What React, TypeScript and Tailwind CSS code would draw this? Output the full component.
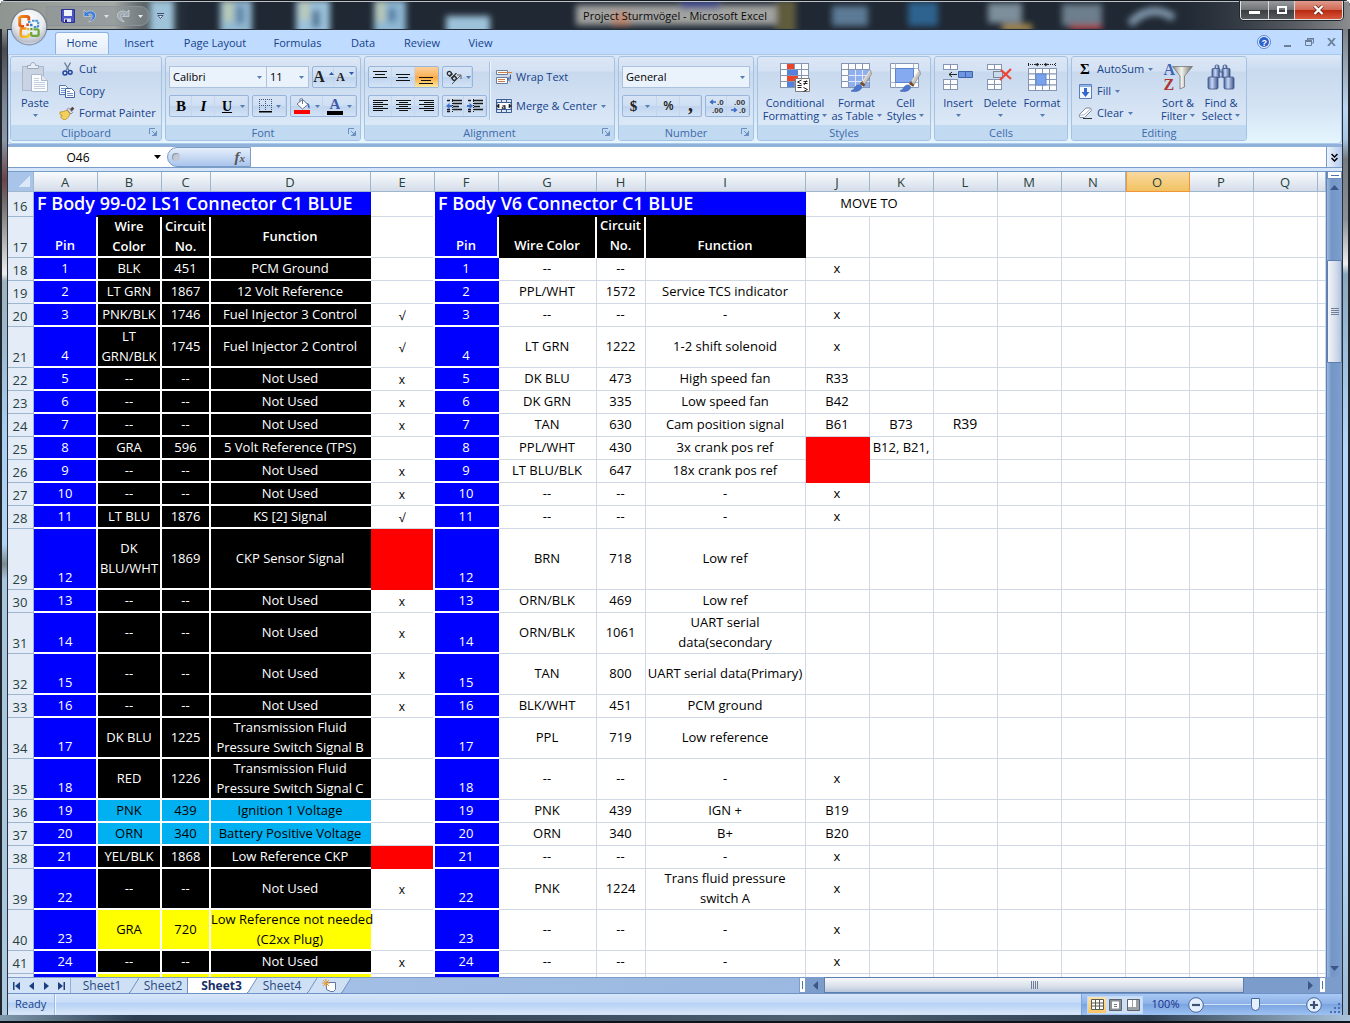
import React from "react";

/* ---------- small shared pieces ---------- */

function Caret({ className = "text-[#567db1]" }: { className?: string }) {
  return (
    <svg width="5" height="3" viewBox="0 0 5 3" className={`shrink-0 ${className}`} aria-hidden="true">
      <path d="M0 0h5L2.5 3z" fill="currentColor" />
    </svg>
  );
}

function Launcher() {
  return (
    <svg width="8" height="8" viewBox="0 0 8 8" fill="none" aria-hidden="true">
      <path d="M.5 6V.5H6" stroke="#6b8fc0" />
      <path d="M3 3l3 3M7.5 3v4.5H3" stroke="#6b8fc0" />
      <path d="M7 4v3H4z" fill="#6b8fc0" />
    </svg>
  );
}

function Group({
  label,
  launcher,
  className,
  children,
}: {
  label: string;
  launcher?: boolean;
  className: string;
  children: React.ReactNode;
}) {
  return (
    <section
      aria-label={label}
      className={`flex h-[85px] shrink-0 flex-col overflow-hidden rounded-[3px] border border-[#a6c2e3] bg-[linear-gradient(#dce7f5_0px,#d3e1f3_14px,#c8d9ee_15px,#dbe8f7_69px)] ${className}`}
    >
      <div className="min-h-0 flex-1">{children}</div>
      <div className="relative h-[15px] shrink-0 bg-[#c1d9f1] text-center text-[11px] leading-[15px] text-[#3e6aaa]">
        {label}
        {launcher && (
          <button aria-label={`${label} options`} className="absolute right-1 top-[3px]">
            <Launcher />
          </button>
        )}
      </div>
    </section>
  );
}

function Box({ className = "", children }: { className?: string; children: React.ReactNode }) {
  return (
    <div
      className={`flex h-[22px] shrink-0 items-stretch rounded-[2px] border border-[#98b5dc] bg-[linear-gradient(#d6e4f5_0%,#cfdff3_48%,#c0d4ee_52%,#d3e3f6_100%)] ${className}`}
    >
      {children}
    </div>
  );
}

function Tool({
  label,
  active,
  className = "w-[23px]",
  children,
}: {
  label: string;
  active?: boolean;
  className?: string;
  children: React.ReactNode;
}) {
  return (
    <button
      aria-label={label}
      title={label}
      className={`flex shrink-0 items-center justify-center gap-1 ${
        active
          ? "bg-[linear-gradient(#fcd09a_0%,#fbb45c_45%,#fca63c_50%,#fee89a_100%)]"
          : "shadow-[inset_-1px_0_0_#c4d6ee]"
      } ${className}`}
    >
      {children}
    </button>
  );
}

function Picker({ label, value, className }: { label: string; value: string; className: string }) {
  return (
    <div className={`relative flex h-[22px] shrink-0 items-center border border-[#abc1de] bg-[#eaf2fb] ${className}`}>
      <select aria-label={label} className="h-full w-full appearance-none bg-transparent pl-[3px] text-[11px] text-black outline-none">
        <option>{value}</option>
      </select>
      <span className="pointer-events-none absolute right-1">
        <Caret />
      </span>
    </div>
  );
}

function RowButton({ icon, caret, children }: { icon: React.ReactNode; caret?: boolean; children: React.ReactNode }) {
  return (
    <button className="flex h-[22px] items-center gap-1 whitespace-nowrap text-[11px] text-[#15428b]">
      <span className="flex w-4 justify-center">{icon}</span>
      <span>{children}</span>
      {caret && <Caret />}
    </button>
  );
}

function BigButton({
  icon,
  lines,
  inline,
  className,
}: {
  icon: React.ReactNode;
  lines: string[];
  inline?: boolean;
  className: string;
}) {
  return (
    <button
      className={`flex shrink-0 flex-col items-center whitespace-nowrap pt-1 text-[11px] leading-[13px] text-[#15428b] ${className}`}
    >
      <span className="mb-[3px] flex h-8 items-center">{icon}</span>
      <span>{lines[0]}</span>
      {inline ? (
        <span className="flex items-center gap-[3px]">
          {lines[1]}
          <Caret />
        </span>
      ) : (
        <span className="flex h-[13px] items-center">
          <Caret />
        </span>
      )}
    </button>
  );
}

/* ---------- icons ---------- */

const OfficeLogo = () => (
  <svg width="38" height="38" viewBox="0 0 38 38" aria-hidden="true">
    <defs>
      <radialGradient id="orb" cx="50%" cy="30%" r="75%">
        <stop offset="0" stopColor="#fff" />
        <stop offset=".55" stopColor="#e9ebef" />
        <stop offset=".85" stopColor="#b9bec9" />
        <stop offset="1" stopColor="#eef1f6" />
      </radialGradient>
      <linearGradient id="orbRed" x1="0" y1="0" x2="1" y2="1">
        <stop offset="0" stopColor="#f0901c" />
        <stop offset="1" stopColor="#d4300a" />
      </linearGradient>
      <linearGradient id="orbYellow" x1="0" y1="0" x2="1" y2="1">
        <stop offset="0" stopColor="#f08a1c" />
        <stop offset="1" stopColor="#f8ca2c" />
      </linearGradient>
    </defs>
    <circle cx="19" cy="19" r="18.5" fill="#5b6573" opacity=".6" />
    <circle cx="19" cy="19" r="17.3" fill="url(#orb)" />
    <g fill="none" strokeLinejoin="round">
      <path d="M14 18.500h-2.500l-1.800-1.200V9.800l1.800-1.300h6l1.300 1v3" stroke="url(#orbRed)" strokeWidth="2.900" />
      <path d="M16.500 20.500h-4.500l-1.200 1v6l1.200 1.200h5.500l1.200-1v-2.200" stroke="url(#orbYellow)" strokeWidth="2.500" />
      <path d="M18 14h2.500M22 12.800h5.200l1 .8v4.600l-1 .9H23" stroke="#4a94d6" strokeWidth="2" strokeDasharray="2.600 .7" />
      <path d="M23.500 21.300h4l1.100.9v4.800l-1.100.9h-5.200l-1.100-.9V24" stroke="#6fa83a" strokeWidth="2.300" />
    </g>
    <path d="M16.300 15.500h2.600v2.600h-2.600z" fill="#d94a17" />
    <path d="M20 15.800h2.500v2.400H20z" fill="#2f7cc8" />
    <path d="M17.200 20h2v2.200h-2z" fill="#eda51b" />
    <path d="M20.300 20h2.200v2.200h-2.200z" fill="#5c9b2c" />
  </svg>
);

const SaveIcon = () => (
  <svg width="14" height="14" viewBox="0 0 14 14" aria-hidden="true">
    <path d="M.5.500h13v13H2L.500 12z" fill="#4c55c4" stroke="#2a3190" />
    <path d="M3 1h8v6H3z" fill="#eef3ff" />
    <path d="M3 9.500h7V13H3z" fill="#d6dcf5" />
    <path d="M4 10.500h2V13H4z" fill="#20266f" />
  </svg>
);

const UndoIcon = ({ flip, color }: { flip?: boolean; color: string }) => (
  <svg width="13" height="14" viewBox="0 0 13 14" className={flip ? "-scale-x-100" : ""} aria-hidden="true">
    <path d="M1 1v6.500h6.500L5.300 5.400c2-1.200 4-.4 4 1.600 0 2.300-1.500 4-3.600 5.900 3.800-1 6.900-3.300 6.900-6.500C12.600 2.200 7 .6 3.300 3.300z" fill={color} stroke="#e6eef8" strokeWidth=".5" />
  </svg>
);

const PasteIcon = () => (
  <svg width="28" height="31" viewBox="0 0 28 31" aria-hidden="true">
    <path d="M1.500 4.500h21v24h-21z" fill="#c9d3e2" stroke="#aab6c9" />
    <path d="M6.500 6.500V3.500h3c0-4 5-4 5 0h3v3z" fill="#e9eef5" stroke="#9ba8bb" />
    <path d="M10.500 12.500h10l6 6v11h-16z" fill="#fbfcfe" stroke="#a9b8cf" />
    <path d="M20.500 12.500v6h6" fill="#e0e7f1" stroke="#a9b8cf" />
    <path d="M13 16.500h5m-5 2h5m-5 2h11m-11 2h11m-11 2h11m-11 2h11" stroke="#c4cfdf" />
  </svg>
);

const CutIcon = () => (
  <svg width="11" height="14" viewBox="0 0 11 14" fill="none" aria-hidden="true">
    <path d="M2.500.500l4.500 8M8.500.500L4 8.500" stroke="#6b7f9e" strokeWidth="1.400" />
    <circle cx="3" cy="11" r="2" stroke="#24479c" strokeWidth="1.500" />
    <circle cx="8.200" cy="10.300" r="1.900" stroke="#24479c" strokeWidth="1.500" />
  </svg>
);

const CopyIcon = () => (
  <svg width="16" height="14" viewBox="0 0 16 14" aria-hidden="true">
    <path d="M.5 1.500h6l2 2v7h-8z" fill="#f5f9ff" stroke="#5377ad" />
    <path d="M2 4.500h4m-4 2h4m-4 2h4" stroke="#6f93c8" />
    <path d="M6.500 4.500h6l3 3v6h-9z" fill="#fff" stroke="#3f66a3" />
    <path d="M8 7.500h3m-3 2h6m-6 2h6" stroke="#6f93c8" />
  </svg>
);

const PainterIcon = () => (
  <svg width="16" height="14" viewBox="0 0 16 14" aria-hidden="true">
    <path d="M1 6c3 0 5-1 7-2l3 4c-1 2.500-3 5-5 6-2-.5-4-2-4.500-3l2-1.500L1 8.500z" fill="#f3cf5b" stroke="#b98c25" strokeWidth=".8" />
    <path d="M8 3.500l4 4.500 1.500-1.500L9.700 2z" fill="#e8e8ee" stroke="#65656f" strokeWidth=".7" />
    <path d="M11 3.200L13.300.700l2 1.800-2.300 2.700z" fill="#57423a" />
  </svg>
);

const SizeMark = ({ up }: { up?: boolean }) => (
  <svg width="5" height="3" viewBox="0 0 5 3" className="mb-2 shrink-0" aria-hidden="true">
    <path d={up ? "M0 3h5L2.500 0z" : "M0 0h5L2.500 3z"} fill="#2f5aa8" />
  </svg>
);

const Lines = ({ rows, offset = 0, step = 2 }: { rows: number[][]; offset?: number; step?: number }) => (
  <svg width="15" height="14" viewBox="0 0 15 14" aria-hidden="true">
    {rows.map(([x, w], i) => (
      <rect key={i} x={x} y={offset + i * step} width={w} height="1" fill="#111" />
    ))}
  </svg>
);

const IndentIcon = ({ right }: { right?: boolean }) => (
  <svg width="16" height="14" viewBox="0 0 16 14" aria-hidden="true">
    <path d="M1 1.500h3m2 0h10M7 4.500h9M7 7.500h6M1 10.500h3m3 0h9M1 12.500h3" stroke="#1a1a1a" strokeWidth="1.500" />
    <path d="M6.500 0v14" stroke="#1a1a1a" strokeDasharray="1 1" />
    <path d={right ? "M0 6h2.500V3.700L6 7 2.500 10V8H0z" : "M6 6H3.500V3.700L0 7l3.500 3V8H6z"} fill="#3f6fc9" />
  </svg>
);

const OrientationIcon = () => (
  <svg width="17" height="16" viewBox="0 0 17 16" fill="none" aria-hidden="true">
    <g stroke="#2b2b2b" strokeWidth="1.300" transform="rotate(45 7 6)">
      <circle cx="4" cy="6.800" r="2" />
      <path d="M6.300 4.500v4.600M8.800 1.500v7.600" />
      <circle cx="11" cy="6.800" r="2" />
    </g>
    <path d="M7 15l8.500-8.500M16 6v4M16 6h-4" stroke="#5a5a5a" />
  </svg>
);

const WrapIcon = () => (
  <svg width="16" height="15" viewBox="0 0 16 15" aria-hidden="true">
    <path d="M.5.500h11v4H.500zM.500 7.500h11v6H.500z" fill="#fff" stroke="#6c7d97" />
    <path d="M2 2.500h14M2 9.500h7M2 11.500h7" stroke="#d08246" />
    <path d="M14.500 4.500V9H12m2-2.500L11.500 9l2.500 2.500" stroke="#3c5a96" fill="none" />
  </svg>
);

const MergeIcon = () => (
  <svg width="16" height="14" viewBox="0 0 16 14" aria-hidden="true">
    <path d="M.5.500h15v13H.500z" fill="#dce8f8" stroke="#3e5d92" />
    <path d="M5.500.500v13M10.500.500v13" stroke="#3e5d92" />
    <path d="M1 3.500h14v7H1z" fill="#fff" stroke="#3e5d92" />
    <text x="5.500" y="9.500" fontSize="9" fontWeight="bold" fontFamily="Liberation Serif, serif" fill="#222">
      a
    </text>
    <path d="M0 7h3m10 0h3M3 5l-2 2 2 2zM13 5l2 2-2 2z" stroke="#222" fill="#222" strokeWidth=".7" />
  </svg>
);

const BordersIcon = () => (
  <svg width="13" height="14" viewBox="0 0 13 14" aria-hidden="true">
    <path d="M0 .5h13M0 6.500h13M.5 0v12M6.500 0v12M12.500 0v12" stroke="#3d5379" strokeDasharray="1 1" />
    <path d="M0 12.800h13" stroke="#000" strokeWidth="1.400" />
  </svg>
);

const FillColorIcon = () => (
  <svg width="17" height="16" viewBox="0 0 17 16" aria-hidden="true">
    <path d="M3 6l5.500-4.500L14 6.500 8.500 11z" fill="#fff" stroke="#6a7890" />
    <path d="M6 4c-1-3 1.500-5 2.500-3v5" stroke="#6a7890" fill="none" />
    <path d="M12 5c3 0 4 2 3.500 6-1.500-1-2-3-1.500-4.500z" fill="#3b69c4" />
    <path d="M0 12h16v4H0z" fill="#f00" />
  </svg>
);

const DecimalIcon = ({ increase }: { increase?: boolean }) => (
  <svg width="17" height="16" viewBox="0 0 17 16" aria-hidden="true">
    <g fontSize="8" fontWeight="bold" fontFamily="Liberation Sans, sans-serif" fill="#333">
      <text x={increase ? 9 : 4} y="7">{increase ? ".0" : ".00"}</text>
      <text x={increase ? 4 : 9} y="15">{increase ? ".00" : ".0"}</text>
    </g>
    <path d={increase ? "M8 4H3m2-2L2.500 4 5 6" : "M1 12h5M4 10l2.500 2L4 14"} stroke="#3a68c8" strokeWidth="1.300" fill="none" />
  </svg>
);

const Brush = () => (
  <g>
    <path d="M29.500 7L21 19l3 2.500L30.500 11z" fill="#c7c7c4" stroke="#77746e" strokeWidth=".6" />
    <path d="M29 7.500L22 18" stroke="#efe8dc" strokeWidth="1.200" />
    <path d="M20.500 18.500l4 3.500-2 1.500-3.500-2.500z" fill="#7a4a24" />
    <path d="M10 28c3-1 3-3 5-5 2-1.500 4-1.500 5 0 1.500 1.500 0 4-3 5-2.500.8-5 .8-7 0z" fill="#4d77cf" stroke="#3558a5" strokeWidth=".5" />
  </g>
);

const GridCells = ({ x, y, c, r, w, h }: { x: number; y: number; c: number; r: number; w: number; h: number }) => (
  <g fill="#fbfdff" stroke="#8595b3">
    {Array.from({ length: c * r }, (_, i) => (
      <rect key={i} x={x + (i % c) * w} y={y + Math.floor(i / c) * h} width={w} height={h} />
    ))}
  </g>
);

const ConditionalIcon = () => (
  <svg width="31" height="29" viewBox="0 0 31 29" aria-hidden="true">
    <GridCells x={0.5} y={0.5} c={4} r={4} w={7} h={6} />
    <path d="M7 1h7v5H7zM7 13h11v5H7z" fill="#e8452c" />
    <path d="M7 7h11v5H7zM7 19h7v5H7z" fill="#5580dc" />
    <path d="M15.500 15.500h14v13h-14z" fill="#fff" stroke="#7b7b7b" />
    <path d="M21.500 17l-4 2 4 2m-4 1.500h4m-4 2h4m2-6h4m-4 2h4m-1-3l-2.500 4.500m-.5 2.500l4 2-4 2" stroke="#222" fill="none" />
  </svg>
);

const FormatTableIcon = () => (
  <svg width="31" height="29" viewBox="0 0 31 29" aria-hidden="true">
    <GridCells x={0.5} y={0.5} c={4} r={4} w={7} h={6} />
    <path d="M8 7h20v17H8z" fill="#7ba2ea" opacity=".85" />
    <path d="M7.500 12.500h21M7.500 18.500h21M14.500 7v17M21.500 7v17" stroke="#dfe9fb" />
    <Brush />
  </svg>
);

const CellStylesIcon = () => (
  <svg width="31" height="29" viewBox="0 0 31 29" aria-hidden="true">
    <path d="M.5.500h28v24H.500z" fill="#fbfdff" stroke="#8595b3" />
    <path d="M5.500.500v24M23.500.500v24M.500 5.500h28M.500 19.500h28" stroke="#a9b6cd" />
    <path d="M5.500 5.500h18v14h-18z" fill="#86aaf0" stroke="#5c82cc" />
    <Brush />
  </svg>
);

const InsertIcon = () => (
  <svg width="30" height="27" viewBox="0 0 30 27" aria-hidden="true">
    <GridCells x={0.5} y={0.5} c={2} r={1} w={7} h={5} />
    <GridCells x={0.5} y={15.5} c={2} r={2} w={7} h={5} />
    <path d="M15.500 7.500h7v6h-7zM22.500 7.500h7v6h-7z" fill="#6d95e0" stroke="#3e62a8" />
    <path d="M6 10.500h8M9 8l-3 2.500L9 13" stroke="#222" fill="none" />
  </svg>
);

const DeleteIcon = () => (
  <svg width="26" height="27" viewBox="0 0 26 27" aria-hidden="true">
    <GridCells x={0.5} y={0.5} c={2} r={1} w={7} h={5} />
    <GridCells x={0.5} y={15.5} c={2} r={2} w={7} h={5} />
    <path d="M6.500 7.500h9v6h-9z" fill="none" stroke="#333" strokeDasharray="1 1" />
    <path d="M14 6l10 9M24 5L13 16" stroke="#ee4436" strokeWidth="2.200" />
  </svg>
);

const FormatIcon = () => (
  <svg width="31" height="29" viewBox="0 0 31 29" aria-hidden="true">
    <path d="M1 1.500h28M1.500 0v3M28.500 0v3M8 1.500l3-1.500v3zM21 1.500L18 0v3z" stroke="#222" strokeDasharray="1 1" fill="#222" />
    <GridCells x={1.5} y={5.5} c={4} r={4} w={7} h={5.5} />
    <path d="M9 11h10v11H9z" fill="#79a2ee" stroke="#5f86cf" />
    <path d="M3 27.500h12" stroke="#8595b3" />
  </svg>
);

const FillIcon = () => (
  <svg width="13" height="15" viewBox="0 0 13 15" aria-hidden="true">
    <path d="M.5.500h12v14H.500z" fill="#f3f8ff" stroke="#5b7fb8" />
    <path d="M1 1h11v2H1z" fill="#8fb2e8" />
    <path d="M5 4h3v4h2.500l-4 5-4-5H5z" fill="#3468cc" />
  </svg>
);

const ClearIcon = () => (
  <svg width="15" height="12" viewBox="0 0 15 12" aria-hidden="true">
    <path d="M1 8l7-7h4.500l1 2.500-7 7H2z" fill="#fff" stroke="#7d8aa3" />
    <path d="M1 8h5l7-6.500" stroke="#aab4c8" fill="none" />
    <path d="M5 11.500h9" stroke="#333" />
  </svg>
);

const SortIcon = () => (
  <span className="relative flex w-[29px] flex-col items-start font-['Liberation_Serif',serif] text-[16px] font-bold leading-[15px]">
    <span className="text-[#3e62b4]">A</span>
    <span className="text-[#b0342f]">Z</span>
    <svg width="21" height="24" viewBox="0 0 21 24" className="absolute right-0 top-1" aria-hidden="true">
      <defs>
        <linearGradient id="funnel">
          <stop offset="0" stopColor="#8d8d8a" />
          <stop offset=".45" stopColor="#f1f1ee" />
          <stop offset="1" stopColor="#6e6e6b" />
        </linearGradient>
      </defs>
      <path d="M.5.500h20L12.500 10v11L8 23V10z" fill="url(#funnel)" stroke="#6b6b68" strokeWidth=".7" />
    </svg>
  </span>
);

const FindIcon = () => (
  <svg width="28" height="26" viewBox="0 0 28 26" aria-hidden="true">
    <defs>
      <linearGradient id="bino">
        <stop offset="0" stopColor="#4a629b" />
        <stop offset=".4" stopColor="#c6d8f5" />
        <stop offset="1" stopColor="#3d5488" />
      </linearGradient>
    </defs>
    <g stroke="#3d5488" strokeWidth=".8" fill="url(#bino)">
      <rect x="8" y="1" width="4" height="4" rx="1.500" />
      <rect x="16" y="1" width="4" height="4" rx="1.500" />
      <rect x="5" y="4.500" width="8" height="9" rx="1" />
      <rect x="15" y="4.500" width="8" height="9" rx="1" />
      <rect x="12" y="8" width="4" height="5" />
      <rect x="1" y="13" width="10" height="12" rx="1.500" />
      <rect x="17" y="13" width="10" height="12" rx="1.500" />
    </g>
  </svg>
);

/* ---------- title bar ---------- */

function TitleBackdrop() {
  return (
    <svg className="absolute inset-0 h-full w-full" viewBox="0 0 1350 29" preserveAspectRatio="none" aria-hidden="true">
      <defs>
        <filter id="soft" x="-20%" y="-20%" width="140%" height="140%">
          <feGaussianBlur stdDeviation="3" />
        </filter>
        <linearGradient id="glassEnd">
          <stop offset="0" stopColor="#3b3f45" stopOpacity="0" />
          <stop offset="1" stopColor="#8b8d8f" />
        </linearGradient>
        <linearGradient id="glassStart">
          <stop offset="0" stopColor="#8f9590" />
          <stop offset=".6" stopColor="#a4a9a4" />
          <stop offset="1" stopColor="#4a5560" stopOpacity="0" />
        </linearGradient>
      </defs>
      <rect width="1350" height="29" fill="#1f2833" />
      <rect width="190" height="29" fill="url(#glassStart)" />
      <g filter="url(#soft)">
        <rect x="150" y="0" width="24" height="36" fill="#9fc4da" />
        <rect x="220" y="0" width="32" height="36" fill="#93b9d2" />
        <rect x="224" y="0" width="9" height="22" fill="#b9c9b4" />
        <rect x="236" y="6" width="8" height="18" fill="#5c83a5" />
        <rect x="296" y="0" width="34" height="36" fill="#9cc3dc" />
        <rect x="300" y="0" width="9" height="20" fill="#bccab6" />
        <rect x="312" y="10" width="8" height="18" fill="#4d7396" />
        <rect x="374" y="0" width="32" height="36" fill="#8fb8d4" />
        <rect x="376" y="0" width="9" height="22" fill="#b8c8b2" />
        <rect x="388" y="8" width="8" height="14" fill="#547ea4" />
        <rect x="446" y="16" width="44" height="20" fill="#9cc2da" />
        <rect x="576" y="5" width="200" height="20" fill="#b8b8b4" opacity=".85" />
        <rect x="612" y="12" width="18" height="14" fill="#c08a72" />
        <rect x="680" y="0" width="40" height="9" fill="#414c8d" />
        <rect x="776" y="0" width="20" height="34" fill="#5e5c3c" />
        <rect x="832" y="6" width="36" height="20" fill="#5b7a95" />
        <rect x="908" y="2" width="30" height="24" fill="#2f628f" />
        <rect x="988" y="3" width="34" height="20" fill="#7d8f9b" />
        <rect x="1002" y="24" width="30" height="8" fill="#a88a4b" />
        <rect x="1062" y="4" width="40" height="22" fill="#6d7e8c" />
        <rect x="1070" y="25" width="32" height="6" fill="#a82a2f" />
        <path d="M1130 24q20-22 44-6" stroke="#7f96ab" strokeWidth="8" fill="none" />
      </g>
      <rect x="1170" width="180" height="29" fill="url(#glassEnd)" />
      <rect width="1350" height="1" fill="#15181c" />
      <rect y="1" width="1350" height="1" fill="#b9c2c9" />
    </svg>
  );
}

function TitleBar() {
  return (
    <header className="relative flex h-[29px] shrink-0 justify-center overflow-hidden">
      <TitleBackdrop />
      <div className="absolute left-[46px] top-[6px] flex h-[20px] w-[104px] items-center rounded-r-full border border-[#8b9299] bg-[#8c9398]/50 pl-[14px]">
        <button aria-label="Save"><SaveIcon /></button>
        <button aria-label="Undo" className="ml-2 flex items-center gap-2">
          <UndoIcon color="#3f7fd8" />
          <Caret className="text-[#d8e3ee]" />
        </button>
        <button aria-label="Redo" className="ml-2 flex items-center gap-2">
          <UndoIcon flip color="#9fa9b3" />
          <Caret className="text-[#e8eef4]" />
        </button>
      </div>
      <button aria-label="Customize Quick Access Toolbar" className="absolute left-[157px] top-[13px]">
        <svg width="7" height="6" viewBox="0 0 7 6" aria-hidden="true">
          <path d="M0 .5h7M1 2.500h5L3.500 5.500z" stroke="#15233c" fill="#e6eefa" strokeWidth=".7" />
        </svg>
      </button>
      <h1 className="relative text-[11px] leading-[31px] text-[#0b0b0b]">
        Project Sturmvögel - Microsoft Excel
      </h1>
      <div className="absolute right-[7px] top-[1px] flex h-[19px] overflow-hidden rounded-b-[4px] border border-t-0 border-[#dfe3e6] shadow-[0_0_0_1px_#22262b]">
        <button aria-label="Minimize" className="flex w-7 items-center justify-center border-r border-[#d6dadd] bg-[linear-gradient(#999b9e_0%,#717478_48%,#3b3d41_52%,#55585c_100%)]">
          <span className="mt-1 block h-[3px] w-[11px] bg-white" />
        </button>
        <button aria-label="Restore" className="flex w-[26px] items-center justify-center border-r border-[#d6dadd] bg-[linear-gradient(#999b9e_0%,#717478_48%,#3b3d41_52%,#55585c_100%)]">
          <span className="block h-2 w-[10px] border-2 border-white" />
        </button>
        <button aria-label="Close" className="flex w-[47px] items-center justify-center bg-[linear-gradient(#e09a8c_0%,#d06a55_48%,#b82a12_52%,#d9573a_100%)]">
          <svg width="11" height="10" viewBox="0 0 11 10" aria-hidden="true">
            <path d="M1.500 1l8 8m0-8l-8 8" stroke="#5d1c12" strokeWidth="3.600" />
            <path d="M1.500 1l8 8m0-8l-8 8" stroke="#fff" strokeWidth="2.400" />
          </svg>
        </button>
      </div>
    </header>
  );
}

/* ---------- ribbon ---------- */

function RibbonTabs() {
  return (
    <nav className="flex h-6 shrink-0 items-end bg-[#bfdbff] pl-[47px] pr-[6px] text-[11px] text-[#15428b]">
      <button className="h-[22px] w-[54px] rounded-t-[3px] border border-b-0 border-[#8db2e3] bg-[linear-gradient(#f6faff,#e3edf9)]">Home</button>
      <button className="h-[22px] w-[60px]">Insert</button>
      <button className="h-[22px] w-[92px]">Page Layout</button>
      <button className="h-[22px] w-[73px]">Formulas</button>
      <button className="h-[22px] w-[58px]">Data</button>
      <button className="h-[22px] w-[60px]">Review</button>
      <button className="h-[22px] w-[57px]">View</button>
      <div className="ml-auto flex h-[24px] items-center gap-[13px]">
        <button aria-label="Help">
          <svg width="14" height="14" viewBox="0 0 14 14" aria-hidden="true">
            <circle cx="7" cy="7" r="6.500" fill="#eef4ff" stroke="#5c86cf" />
            <circle cx="7" cy="7" r="5" fill="#2c62cc" />
            <text x="4.500" y="10.500" fontSize="9" fontWeight="bold" fontFamily="Liberation Sans, sans-serif" fill="#fff">?</text>
          </svg>
        </button>
        <button aria-label="Minimize workbook" className="flex h-3 items-end">
          <span className="mb-[1px] block h-[2px] w-[7px] bg-[#6b7f99]" />
        </button>
        <button aria-label="Restore workbook" className="pl-[1px]">
          <svg width="9" height="8" viewBox="0 0 9 8" aria-hidden="true">
            <path d="M2.500 2V.800h6V5H7M.500 2.800h6v4.700h-6z" fill="none" stroke="#6b7f99" />
            <path d="M0 2h7v2H0zM2 0h7v1.500H2z" fill="#6b7f99" />
          </svg>
        </button>
        <button aria-label="Close workbook">
          <svg width="9" height="8" viewBox="0 0 9 8" aria-hidden="true">
            <path d="M1 0l7 8M8 0L1 8" stroke="#6b7f99" strokeWidth="1.800" />
          </svg>
        </button>
      </div>
    </nav>
  );
}

const serif = "font-['Liberation_Serif',serif]";

function Ribbon() {
  return (
    <div className="h-[93px] shrink-0 border-b-[3px] border-[#8fb1da] bg-[#cfe0f5]">
      <div className="flex h-[90px] gap-[3px] rounded-b-[4px] border border-[#a9c9ec] bg-[linear-gradient(#dce8f6_0px,#c9daee_16px,#d3e2f3_50px,#e6f7ff_90px)] pl-[1px] pt-[1px]">
        <Group label="Clipboard" launcher className="w-[152px]">
          <div className="flex">
            <BigButton icon={<PasteIcon />} lines={["Paste"]} className="w-12" />
            <div className="flex flex-col pt-[1px]">
              <RowButton icon={<CutIcon />}>Cut</RowButton>
              <RowButton icon={<CopyIcon />}>Copy</RowButton>
              <RowButton icon={<PainterIcon />}>Format Painter</RowButton>
            </div>
          </div>
        </Group>

        <Group label="Font" launcher className="w-[196px]">
          <div className="flex flex-col gap-[7px] px-[3px] pt-[9px]">
            <div className="flex">
              <Picker label="Font name" value="Calibri" className="w-[98px]" />
              <Picker label="Font size" value="11" className="w-[42px] border-l-0" />
              <Box className="ml-[3px]">
                <Tool label="Grow font" className="w-[21px] gap-0">
                  <span className={`${serif} text-[16px] font-bold leading-4 text-[#222]`}>A</span>
                  <SizeMark up />
                </Tool>
                <Tool label="Shrink font" className="w-[22px] gap-0">
                  <span className={`${serif} text-[12px] font-bold leading-4 text-[#222]`}>A</span>
                  <SizeMark />
                </Tool>
              </Box>
            </div>
            <div className="flex justify-between">
              <Box>
                <Tool label="Bold" className="w-[22px]"><span className={`${serif} text-[15px] font-bold`}>B</span></Tool>
                <Tool label="Italic"><span className={`${serif} text-[15px] italic font-bold`}>I</span></Tool>
                <Tool label="Underline" className="w-[33px]">
                  <span className={`${serif} mx-1 text-[14px] font-bold underline`}>U</span>
                  <Caret />
                </Tool>
              </Box>
              <Box>
                <Tool label="Borders" className="w-[33px]"><BordersIcon /><Caret /></Tool>
              </Box>
              <Box>
                <Tool label="Fill color" className="w-8"><FillColorIcon /><Caret /></Tool>
                <Tool label="Font color" className="w-[33px]">
                  <span className={`${serif} block w-4 border-b-4 border-black text-[15px] font-bold leading-[13px] text-[#3c5aa8]`}>A</span>
                  <Caret />
                </Tool>
              </Box>
            </div>
          </div>
        </Group>

        <Group label="Alignment" launcher className="w-[251px]">
          <div className="flex h-full">
            <div className="flex w-[124px] flex-col gap-[7px] pl-[3px] pt-[9px]">
              <div className="flex gap-[3px]">
                <Box>
                  <Tool label="Top align"><Lines offset={1} step={3} rows={[[0, 14], [2, 10], [0, 14]]} /></Tool>
                  <Tool label="Middle align"><Lines offset={4} step={3} rows={[[0, 14], [2, 10], [0, 14]]} /></Tool>
                  <Tool label="Bottom align" active><Lines offset={7} step={3} rows={[[0, 14], [2, 10], [0, 14]]} /></Tool>
                </Box>
                <Box>
                  <Tool label="Orientation" className="w-[29px]"><OrientationIcon /><Caret /></Tool>
                </Box>
              </div>
              <div className="flex gap-[3px]">
                <Box>
                  <Tool label="Align left"><Lines offset={1} rows={[[0, 15], [0, 10], [0, 15], [0, 10], [0, 15], [0, 10]]} /></Tool>
                  <Tool label="Center"><Lines offset={1} rows={[[0, 15], [3, 9], [0, 15], [3, 9], [0, 15], [3, 9]]} /></Tool>
                  <Tool label="Align right"><Lines offset={1} rows={[[0, 15], [5, 10], [0, 15], [5, 10], [0, 15], [5, 10]]} /></Tool>
                </Box>
                <Box>
                  <Tool label="Decrease indent" className="w-[21px]"><IndentIcon /></Tool>
                  <Tool label="Increase indent" className="w-[22px]"><IndentIcon right /></Tool>
                </Box>
              </div>
            </div>
            <div className="my-[5px] w-px bg-[#a5c0e2] shadow-[1px_0_0_#f0f6fd]" />
            <div className="flex flex-col gap-[7px] pl-[6px] pt-[9px]">
              <RowButton icon={<WrapIcon />}>Wrap Text</RowButton>
              <RowButton icon={<MergeIcon />} caret>Merge &amp; Center</RowButton>
            </div>
          </div>
        </Group>

        <Group label="Number" launcher className="w-[136px]">
          <div className="flex flex-col gap-[7px] px-[3px] pt-[9px]">
            <Picker label="Number format" value="General" className="w-full" />
            <div className="flex justify-between">
              <Box>
                <Tool label="Currency" className="w-[34px]">
                  <span className={`${serif} mr-1 text-[15px] font-bold text-[#222]`}>$</span>
                  <Caret />
                </Tool>
                <Tool label="Percent"><span className="text-xs font-semibold text-[#222]">%</span></Tool>
                <Tool label="Comma" className="w-[21px]"><span className={`${serif} pb-1 text-[20px] font-bold leading-4 text-[#222]`}>,</span></Tool>
              </Box>
              <Box>
                <Tool label="Increase decimal" className="w-[21px]"><DecimalIcon increase /></Tool>
                <Tool label="Decrease decimal" className="w-[22px]"><DecimalIcon /></Tool>
              </Box>
            </div>
          </div>
        </Group>

        <Group label="Styles" className="w-[174px]">
          <div className="flex pl-[3px]">
            <BigButton icon={<ConditionalIcon />} lines={["Conditional", "Formatting"]} inline className="w-[68px]" />
            <BigButton icon={<FormatTableIcon />} lines={["Format", "as Table"]} inline className="w-[55px]" />
            <BigButton icon={<CellStylesIcon />} lines={["Cell", "Styles"]} inline className="w-[43px]" />
          </div>
        </Group>

        <Group label="Cells" className="w-[134px]">
          <div className="flex pl-[2px]">
            <BigButton icon={<InsertIcon />} lines={["Insert"]} className="w-[42px]" />
            <BigButton icon={<DeleteIcon />} lines={["Delete"]} className="w-[42px]" />
            <BigButton icon={<FormatIcon />} lines={["Format"]} className="w-[42px]" />
          </div>
        </Group>

        <Group label="Editing" className="w-[176px]">
          <div className="flex">
            <div className="flex w-[84px] flex-col pl-[5px] pt-[1px]">
              <RowButton icon={<span className={`${serif} text-[15px] font-bold text-black`}>Σ</span>} caret>AutoSum</RowButton>
              <RowButton icon={<FillIcon />} caret>Fill</RowButton>
              <RowButton icon={<ClearIcon />} caret>Clear</RowButton>
            </div>
            <BigButton icon={<SortIcon />} lines={["Sort &", "Filter"]} inline className="w-[44px]" />
            <BigButton icon={<FindIcon />} lines={["Find &", "Select"]} inline className="w-[42px]" />
          </div>
        </Group>
      </div>
    </div>
  );
}

function FormulaBar() {
  return (
    <div className="flex h-[24px] shrink-0 flex-col bg-[#d5e5fa]">
      <div className="flex h-[21px] items-stretch border-b border-[#7a9cc8] bg-white">
        <input aria-label="Name box" defaultValue="O46" className="w-[140px] bg-white pt-px text-center text-xs text-black outline-none" />
        <button aria-label="Name box list" className="flex w-[19px] items-center justify-center">
          <svg width="7" height="4" viewBox="0 0 7 4" aria-hidden="true"><path d="M0 0h7L3.500 4z" fill="#000" /></svg>
        </button>
        <div className="flex w-[84px] items-center justify-between rounded-l-full border border-[#7a9cc8] bg-[linear-gradient(#e6effb,#a9c4ec)] pl-1 pr-[5px]">
          <span className="block h-2 w-2 rounded-full bg-[#c3cad6] shadow-[inset_1px_1px_1px_#8d97a8]" />
          <button aria-label="Insert function" className="font-['Liberation_Serif',serif] text-[15px] font-bold italic leading-4 text-[#555]">
            f<span className="text-[11px]">x</span>
          </button>
        </div>
        <input aria-label="Formula" className="min-w-0 flex-1 bg-white px-1 text-xs outline-none" />
        <button aria-label="Expand formula bar" className="flex w-4 items-center justify-center border-l border-[#7a9cc8] bg-[linear-gradient(90deg,#eaf2fc,#b4cbec)]">
          <svg width="7" height="9" viewBox="0 0 7 9" fill="none" aria-hidden="true">
            <path d="M.5 1l3 3 3-3M.5 5l3 3 3-3" stroke="#000" strokeWidth="1.500" />
          </svg>
        </button>
      </div>
    </div>
  );
}

/* ---------- worksheet ---------- */

const columns = ["A", "B", "C", "D", "E", "F", "G", "H", "I", "J", "K", "L", "M", "N", "O", "P", "Q", ""];

type Row = {
  n: number;
  h: string;
  pin: string;
  left: [string, string, string];
  e?: string;
  right: [string, string, string];
  move?: [string?, string?, string?];
  tone?: "sky" | "yellow";
};

const H1 = "h-[23px]";
const H2 = "h-[41px]";
const none: [string, string, string] = ["--", "--", "Not Used"];

const rows: Row[] = [
  { n: 18, h: H1, pin: "1", left: ["BLK", "451", "PCM Ground"], right: ["--", "--", ""], move: ["x"] },
  { n: 19, h: H1, pin: "2", left: ["LT GRN", "1867", "12 Volt Reference"], right: ["PPL/WHT", "1572", "Service TCS indicator"] },
  { n: 20, h: H1, pin: "3", left: ["PNK/BLK", "1746", "Fuel Injector 3 Control"], e: "√", right: ["--", "--", "-"], move: ["x"] },
  { n: 21, h: H2, pin: "4", left: ["LT\nGRN/BLK", "1745", "Fuel Injector 2 Control"], e: "√", right: ["LT GRN", "1222", "1-2 shift solenoid"], move: ["x"] },
  { n: 22, h: H1, pin: "5", left: none, e: "x", right: ["DK BLU", "473", "High speed fan"], move: ["R33"] },
  { n: 23, h: H1, pin: "6", left: none, e: "x", right: ["DK GRN", "335", "Low speed fan"], move: ["B42"] },
  { n: 24, h: H1, pin: "7", left: none, e: "x", right: ["TAN", "630", "Cam position signal"], move: ["B61", "B73", "R39"] },
  { n: 25, h: H1, pin: "8", left: ["GRA", "596", "5 Volt Reference (TPS)"], right: ["PPL/WHT", "430", "3x crank pos ref"], move: ["red", "B12, B21,"] },
  { n: 26, h: H1, pin: "9", left: none, e: "x", right: ["LT BLU/BLK", "647", "18x crank pos ref"], move: ["red"] },
  { n: 27, h: H1, pin: "10", left: none, e: "x", right: ["--", "--", "-"], move: ["x"] },
  { n: 28, h: H1, pin: "11", left: ["LT BLU", "1876", "KS [2] Signal"], e: "√", right: ["--", "--", "-"], move: ["x"] },
  { n: 29, h: "h-[61px]", pin: "12", left: ["DK\nBLU/WHT", "1869", "CKP Sensor Signal"], e: "red", right: ["BRN", "718", "Low ref"] },
  { n: 30, h: H1, pin: "13", left: none, e: "x", right: ["ORN/BLK", "469", "Low ref"] },
  { n: 31, h: H2, pin: "14", left: none, e: "x", right: ["ORN/BLK", "1061", "UART serial\ndata(secondary"] },
  { n: 32, h: H2, pin: "15", left: none, e: "x", right: ["TAN", "800", "UART serial data(Primary)"] },
  { n: 33, h: H1, pin: "16", left: none, e: "x", right: ["BLK/WHT", "451", "PCM ground"] },
  { n: 34, h: H2, pin: "17", left: ["DK BLU", "1225", "Transmission Fluid\nPressure Switch Signal B"], right: ["PPL", "719", "Low reference"] },
  { n: 35, h: H2, pin: "18", left: ["RED", "1226", "Transmission Fluid\nPressure Switch Signal C"], right: ["--", "--", "-"], move: ["x"] },
  { n: 36, h: H1, pin: "19", left: ["PNK", "439", "Ignition 1 Voltage"], right: ["PNK", "439", "IGN +"], move: ["B19"], tone: "sky" },
  { n: 37, h: H1, pin: "20", left: ["ORN", "340", "Battery Positive Voltage"], right: ["ORN", "340", "B+"], move: ["B20"], tone: "sky" },
  { n: 38, h: H1, pin: "21", left: ["YEL/BLK", "1868", "Low Reference CKP"], e: "red", right: ["--", "--", "-"], move: ["x"] },
  { n: 39, h: H2, pin: "22", left: none, e: "x", right: ["PNK", "1224", "Trans fluid pressure\nswitch A"], move: ["x"] },
  { n: 40, h: H2, pin: "23", left: ["GRA", "720", "Low Reference not needed\n(C2xx Plug)"], right: ["--", "--", "-"], move: ["x"], tone: "yellow" },
  { n: 41, h: H1, pin: "24", left: none, e: "x", right: ["--", "--", "-"], move: ["x"] },
  { n: 42, h: H1, pin: "", left: ["", "", ""], right: ["", "", ""], tone: "yellow" },
];

const grid = "shadow-[inset_-1px_-1px_0_#d0d7e5]";
const gap = "shadow-[inset_-2px_-2px_0_#fff]";
const gapBottom = "shadow-[inset_0_-2px_0_#fff]";
const gapRight = "shadow-[inset_-2px_0_0_#fff]";
const edge = "shadow-[inset_-2px_0_0_#fff,inset_0_-1px_0_#d0d7e5]";
const blue = "bg-[#0000ff] pb-[3px] align-bottom text-white";
const tones = { black: "bg-black text-white", sky: "bg-[#00b0f0] text-black", yellow: "bg-[#ffff00] text-black" };

/* A body cell; its text sits slightly above the middle, as the sheet font does. */
function Cell({ className, span, children }: { className: string; span?: number; children?: React.ReactNode }) {
  return (
    <td colSpan={span} className={className}>
      {children ? <div className="-mt-1">{children}</div> : null}
    </td>
  );
}

function RowHead({ n }: { n: number }) {
  return (
    <th scope="row" className="bg-[#e4ecf7] pb-px text-center align-bottom text-[13px] font-normal leading-5 text-[#27413e] shadow-[inset_-1px_-1px_0_#9eb6ce]">
      {n}
    </th>
  );
}

function Blank({ count }: { count: number }) {
  return (
    <>
      {Array.from({ length: count }, (_, i) => (
        <td key={i} className={grid} />
      ))}
    </>
  );
}

function SheetRow({ row }: { row: Row }) {
  const tone = tones[row.tone ?? "black"];
  const [j, k, l] = row.move ?? [];
  return (
    <tr className={row.h}>
      <RowHead n={row.n} />
      <Cell className={`${blue} ${gap}`}>{row.pin}</Cell>
      <Cell className={`${tone} ${gap}`}>{row.left[0]}</Cell>
      <Cell className={`${tone} ${gap}`}>{row.left[1]}</Cell>
      <Cell className={`${tone} ${gapBottom}`}>{row.left[2]}</Cell>
      {row.e === "red" ? (
        <td className={`bg-[#ff0000] ${gapRight}`} />
      ) : (
        <td className={`text-xs ${edge}`}>{row.e}</td>
      )}
      <Cell className={`${blue} ${gapBottom}`}>{row.pin}</Cell>
      <Cell className={grid}>{row.right[0]}</Cell>
      <Cell className={grid}>{row.right[1]}</Cell>
      <Cell className={grid}>{row.right[2]}</Cell>
      {j === "red" ? <td className="bg-[#ff0000]" /> : <Cell className={grid}>{j}</Cell>}
      <Cell className={grid}>{k}</Cell>
      <Cell className={`text-sm leading-5 ${grid}`}>{l}</Cell>
      <Blank count={6} />
    </tr>
  );
}

const titleCell =
  "bg-[#0000ff] bg-[linear-gradient(#000,#000)] bg-[length:calc(100%-63px)_2px] bg-right-bottom bg-no-repeat pl-[3px] text-left text-lg font-semibold leading-6 text-white";

function Worksheet() {
  return (
    <table className="w-full table-fixed border-separate border-spacing-0 whitespace-pre text-center text-[13px] leading-5 text-black [&_td]:pr-[2px] [&_th]:pr-[2px]">
      <colgroup>
        <col className="w-[26px]" />
        <col className="w-[64px]" />
        <col className="w-[64px]" />
        <col className="w-[49px]" />
        <col className="w-[160px]" />
        <col className="w-[64px]" />
        <col className="w-[64px]" />
        <col className="w-[98px]" />
        <col className="w-[49px]" />
        <col className="w-[160px]" />
        <col className="w-[64px]" />
        <col className="w-[64px]" />
        <col className="w-[64px]" />
        <col className="w-[64px]" />
        <col className="w-[64px]" />
        <col className="w-[64px]" />
        <col className="w-[64px]" />
        <col className="w-[64px]" />
        <col />
      </colgroup>
      <thead>
        <tr className="h-5">
          <th className="bg-[#a9c4e9] bg-[linear-gradient(135deg,transparent_50%,#dce8f7_50%)] bg-[length:11px_11px] bg-[position:11px_4px] bg-no-repeat shadow-[inset_-1px_-1px_0_#9eb6ce]" aria-label="Select all" />
          {columns.map((c) => (
            <th
              key={c}
              scope="col"
              className={`text-[13px] font-normal leading-[18px] text-[#27413e] ${
                c === "O"
                  ? "bg-[linear-gradient(#f9d99f,#f1c15f)] shadow-[inset_-1px_-1px_0_#f29536,inset_1px_0_0_#f29536]"
                  : "bg-[linear-gradient(#f9fcfd,#d3dbe9)] shadow-[inset_-1px_-1px_0_#9eb6ce]"
              }`}
            >
              {c}
            </th>
          ))}
        </tr>
      </thead>
      <tbody>
        <tr className="h-[25px]">
          <RowHead n={16} />
          <Cell span={4} className={titleCell}>F Body 99-02 LS1 Connector C1 BLUE</Cell>
          <td className={edge} />
          <Cell span={4} className={titleCell}>F Body V6 Connector C1 BLUE</Cell>
          <Cell span={2} className={grid}>MOVE TO</Cell>
          <Blank count={7} />
        </tr>
        <tr className="h-[41px] font-semibold">
          <RowHead n={17} />
          <Cell className={`${blue} ${gap}`}>Pin</Cell>
          <Cell className={`bg-black text-white ${gap}`}>{"Wire\nColor"}</Cell>
          <Cell className={`bg-black text-white ${gap}`}>{"Circuit\nNo."}</Cell>
          <Cell className={`bg-black text-white ${gapBottom}`}>Function</Cell>
          <td className={edge} />
          <Cell className={`${blue} ${gap}`}>Pin</Cell>
          <Cell className={`bg-black pb-[3px] align-bottom text-white ${gapRight}`}>Wire Color</Cell>
          <Cell className={`bg-black pb-[3px] align-bottom text-white ${gapRight}`}>{"Circuit\nNo."}</Cell>
          <Cell className="bg-black pb-[3px] align-bottom text-white">Function</Cell>
          <Blank count={9} />
        </tr>
        {rows.map((r) => (
          <SheetRow key={r.n} row={r} />
        ))}
      </tbody>
    </table>
  );
}

function VerticalScroll() {
  return (
    <div className="flex w-4 shrink-0 flex-col border-l border-[#5f83b8] bg-[linear-gradient(90deg,#9bb8de,#7396c6_30%,#7e9fcd)]">
      <button aria-label="Split window horizontally" className="flex h-2 items-center justify-center border border-[#6c8fc2] bg-white">
        <span className="block h-px w-2 bg-[#4d74ad]" />
      </button>
      <button aria-label="Scroll up" className="flex h-[17px] items-center justify-center">
        <svg width="9" height="5" viewBox="0 0 9 5" aria-hidden="true"><path d="M0 5h9L4.500 0z" fill="#3c5688" /></svg>
      </button>
      <div className="h-16 shrink-0" />
      <div role="scrollbar" aria-label="Vertical scroll" aria-controls="sheet" aria-valuenow={12} className="flex h-[103px] shrink-0 flex-col items-center justify-center gap-px rounded-[1px] border border-[#5c7fae] bg-[linear-gradient(90deg,#f2f5f9,#d3dcea_60%,#b5c6dd)]">
        <span className="block h-px w-2 bg-[#6f7f97]" />
        <span className="block h-px w-2 bg-[#6f7f97]" />
        <span className="block h-px w-2 bg-[#6f7f97]" />
        <span className="block h-px w-2 bg-[#6f7f97]" />
      </div>
      <div className="flex-1" />
      <button aria-label="Scroll down" className="flex h-[18px] items-center justify-center">
        <svg width="9" height="5" viewBox="0 0 9 5" aria-hidden="true"><path d="M0 0h9L4.500 5z" fill="#3c5688" /></svg>
      </button>
    </div>
  );
}

function Slash({ own, next }: { own: string; next: string }) {
  return (
    <svg width="10" height="15" viewBox="0 0 10 15" className="shrink-0" aria-hidden="true">
      <rect width="10" height="15" fill={next} />
      <path d="M0 0h10L1 14H0z" fill={own} />
      <path d="M0 14.500h1L10 0" fill="none" stroke="#6f92c2" />
    </svg>
  );
}

function NavArrow({ label, d }: { label: string; d: string }) {
  return (
    <button aria-label={label} className="flex w-[14px] items-center justify-center">
      <svg width="8" height="8" viewBox="0 0 8 8" aria-hidden="true"><path d={d} fill="#1c3f80" /></svg>
    </button>
  );
}

function SheetBar() {
  return (
    <div className="flex h-4 shrink-0 items-stretch bg-[#8fafdb] text-xs leading-[15px] text-[#26497f]">
      <div className="flex min-w-0 flex-1 border-t border-[#7c9cc9] bg-[linear-gradient(90deg,#a9c3e8,#9ab8e0)]">
        <div className="flex w-[63px] items-stretch justify-between border-r border-[#8fb0dc] bg-[#d3e3f7] px-[2px]">
          <NavArrow label="First sheet" d="M0 0h1.500v8H0zM7 0v8L2 4z" />
          <NavArrow label="Previous sheet" d="M6 0v8L1 4z" />
          <NavArrow label="Next sheet" d="M2 0v8l5-4z" />
          <NavArrow label="Last sheet" d="M1 0v8l5-4zM6.500 0H8v8H6.500z" />
        </div>
        <button className="w-[58px] bg-[#cfe0f5] pl-1">Sheet1</button>
        <Slash own="#cfe0f5" next="#cfe0f5" />
        <button className="w-[48px] bg-[#cfe0f5]">Sheet2</button>
        <button className="w-[60px] border-l border-[#6f92c2] bg-white pl-2 font-bold text-[#15306a]">Sheet3</button>
        <Slash own="#ffffff" next="#cfe0f5" />
        <button className="w-[50px] bg-[#cfe0f5]">Sheet4</button>
        <Slash own="#cfe0f5" next="#cfe0f5" />
        <button aria-label="Insert worksheet" className="flex w-6 items-center justify-center bg-[#cfe0f5]">
          <svg width="15" height="13" viewBox="0 0 15 13" aria-hidden="true">
            <path d="M4.500 3.500h9v7l-2 2h-3l-4-2z" fill="#fff" stroke="#5d76a0" />
            <path d="M4 0v8M0 4h8M1 1l6 6M7 1L1 7" stroke="#e39a31" />
          </svg>
        </button>
        <Slash own="#cfe0f5" next="#a4bfe6" />
      </div>
      <div className="flex w-[527px] items-stretch">
        <div className="flex w-[7px] items-center justify-center border border-[#7c9cc9] bg-white"><span className="block h-2 w-px bg-[#4d74ad]" /></div>
        <button aria-label="Scroll left" className="flex w-[18px] items-center justify-center bg-[#7c9dcb]">
          <svg width="5" height="9" viewBox="0 0 5 9" aria-hidden="true"><path d="M5 0v9L0 4.500z" fill="#3c5688" /></svg>
        </button>
        <div role="scrollbar" aria-label="Horizontal scroll" aria-controls="sheet" aria-valuenow={0} className="flex flex-1 items-center justify-center gap-px border border-[#5c7fae] bg-[linear-gradient(#f7f8fa,#d9e0ea_60%,#b9c6da)]">
          <span className="block h-2 w-px bg-[#6f7f97]" />
          <span className="block h-2 w-px bg-[#6f7f97]" />
          <span className="block h-2 w-px bg-[#6f7f97]" />
          <span className="block h-2 w-px bg-[#6f7f97]" />
        </div>
        <button aria-label="Scroll right" className="flex w-[75px] items-center justify-end border-t border-[#5c7fae] bg-[#7c9dcb] pr-[6px]">
          <svg width="5" height="9" viewBox="0 0 5 9" aria-hidden="true"><path d="M0 0v9l5-4.500z" fill="#3c5688" /></svg>
        </button>
        <div className="flex w-[7px] items-center justify-center border border-[#7c9cc9] bg-white"><span className="block h-2 w-px bg-[#4d74ad]" /></div>
      </div>
      <div className="w-4 bg-[#7c9dcb]" />
    </div>
  );
}

function ZoomButton({ label, plus }: { label: string; plus?: boolean }) {
  return (
    <button aria-label={label}>
      <svg width="16" height="16" viewBox="0 0 16 16" aria-hidden="true">
        <circle cx="8" cy="8" r="7.300" fill="#e4effc" stroke="#46679c" />
        <path d={plus ? "M4 8h8M8 4v8" : "M4 8h8"} stroke="#3c5176" strokeWidth="2.200" />
      </svg>
    </button>
  );
}

function StatusBar() {
  return (
    <footer className="flex h-[22px] shrink-0 items-stretch border-t border-[#6f93c6] bg-[linear-gradient(#d7e6f9_0%,#c7dcf8_40%,#b3d0f5_42%,#d7e5f7_92%,#cfe2fa_100%)] text-[11px] text-[#15428b]">
      <div className="flex w-[47px] items-center border-r border-[#9cbbe4] pl-[7px] shadow-[1px_0_0_#f0f6ff]">Ready</div>
      <div className="ml-auto flex items-center border-l border-[#7ca2d8] bg-[linear-gradient(#a9c9f5_0%,#8db2e8_45%,#7ba4e0_50%,#9dc1f2_100%)] pl-[5px]">
        <div className="flex h-[18px] border border-[#c2d9f7]">
          <button aria-label="Normal view" className="flex w-[18px] items-center justify-center bg-[linear-gradient(#fbe3ae,#f8c765)]">
            <svg width="13" height="11" viewBox="0 0 13 11" aria-hidden="true">
              <path d="M.5.500h12v10H.500zM4.500.500v10M8.500.500v10M.500 4h12M.500 7h12" fill="#fff" stroke="#5b5b50" />
            </svg>
          </button>
          <button aria-label="Page layout view" className="flex w-[18px] items-center justify-center bg-[#cddff4]">
            <svg width="13" height="12" viewBox="0 0 13 12" aria-hidden="true">
              <path d="M.5.500h12v11H.500z" fill="#8b8f96" stroke="#5d6470" />
              <path d="M3 2.500h7v7H3z" fill="#fff" /><path d="M5 5.500h3m-3 2h3" stroke="#777" />
            </svg>
          </button>
          <button aria-label="Page break view" className="flex w-[18px] items-center justify-center bg-[#cddff4]">
            <svg width="13" height="12" viewBox="0 0 13 12" aria-hidden="true">
              <path d="M.5.500h12v11H.500z" fill="#9b9fa6" stroke="#5d6470" />
              <path d="M1 1h4v7H1zM6 1h3v7H6z" fill="#fff" />
            </svg>
          </button>
        </div>
        <button className="w-[45px] text-center text-[#15308b]">100%</button>
        <ZoomButton label="Zoom out" />
        <input
          type="range"
          aria-label="Zoom"
          min={0}
          max={100}
          defaultValue={50}
          className="h-4 w-[102px] appearance-none bg-[linear-gradient(#cfe2fa,#cfe2fa)] bg-[length:100%_1px] bg-center bg-no-repeat [&::-webkit-slider-thumb]:h-[13px] [&::-webkit-slider-thumb]:w-[9px] [&::-webkit-slider-thumb]:appearance-none [&::-webkit-slider-thumb]:rounded-b-[5px] [&::-webkit-slider-thumb]:border [&::-webkit-slider-thumb]:border-[#46679c] [&::-webkit-slider-thumb]:bg-[#e4effc]"
        />
        <ZoomButton label="Zoom in" plus />
        <svg width="12" height="12" viewBox="0 0 12 12" className="ml-2 mt-2" aria-hidden="true">
          <path d="M8 0h2v2H8zM8 4h2v2H8zM4 4h2v2H4zM8 8h2v2H8zM4 8h2v2H4zM0 8h2v2H0z" fill="#4b6eaa" />
        </svg>
      </div>
    </footer>
  );
}

/* ---------- window ---------- */

export default function App() {
  return (
    <div className="relative flex h-screen flex-col overflow-hidden rounded-t-[6px] bg-[#1c2530] font-['Open_Sans','Noto_Sans',sans-serif]">
      <TitleBar />
      <div className="absolute left-[10px] top-2 z-10">
        <button aria-label="Office button" className="block"><OfficeLogo /></button>
      </div>
      <div className="flex min-h-0 flex-1">
        <div className="w-[7px] shrink-0 border-l-2 border-[#20262c] bg-[linear-gradient(#8d928e_0px,#4b4b50_20px,#7d8796_75px,#8b98a8_110px,#6b4447_150px,#73706f_175px,#eeeeee_245px,#9fb3be_252px,#9db8cf_310px,#a9cdef_400px,#b2d4f4_515px,#7c8b92_535px,#a7c5dd_550px,#aac8e0_100%)]" />
        <main className="flex min-w-0 flex-1 flex-col overflow-hidden border border-b-0 border-[#26303c]">
          <RibbonTabs />
          <Ribbon />
          <FormulaBar />
          <div id="sheet" className="flex min-h-0 flex-1">
            <div className="min-w-0 flex-1 overflow-hidden border-t border-[#7a9cc8] bg-white">
              <Worksheet />
            </div>
            <VerticalScroll />
          </div>
          <SheetBar />
          <StatusBar />
        </main>
        <div className="w-[7px] shrink-0 border-r-2 border-[#20262c] bg-[linear-gradient(#7c8084_0px,#bcd6ef_80px,#a8c6e4_110px,#777b80_130px,#8c9094_190px,#eeeeee_235px,#8ba7ba_245px,#9fc0dc_330px,#b5d7f7_420px,#b5d7f7_800px,#9db9d2_100%)]" />
      </div>
      <div className="h-2 shrink-0 border-b-2 border-[#0f1317] bg-[linear-gradient(90deg,#7f98ab,#2c3e50_10%,#3b4d5f_40%,#4d6070_60%,#2e3f51_85%,#a9c3da)]" />
    </div>
  );
}
